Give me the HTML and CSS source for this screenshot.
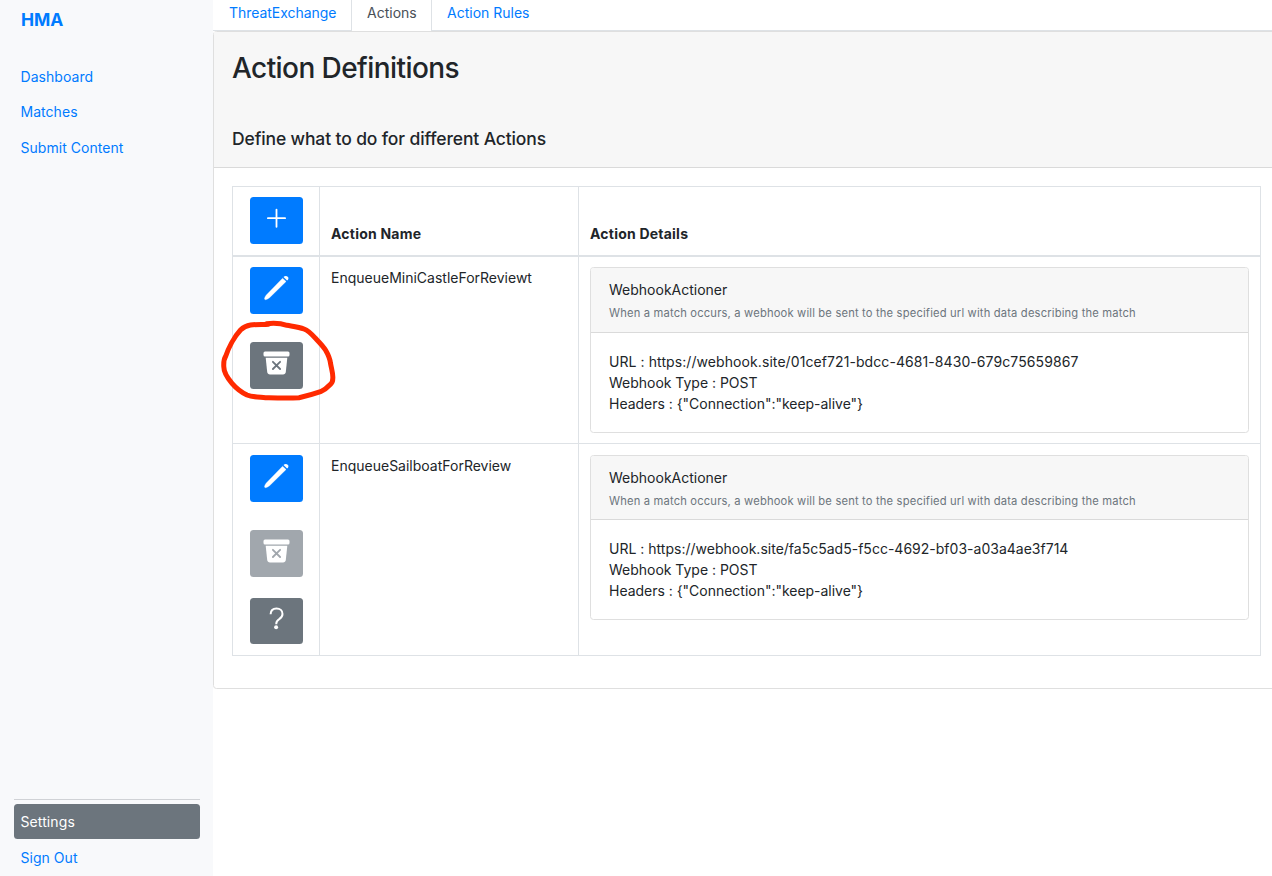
FILE: index.html
```html
<!DOCTYPE html>
<html lang="en">
<head>
<meta charset="utf-8">
<title>HMA - Action Definitions</title>
<link rel="stylesheet" href="styles.css">
</head>
<body>
<svg class="defs" aria-hidden="true">
  <symbol id="plus" viewBox="-0.5 0 29 28"><path d="M14 5.6v17.2M5.4 14.200h17.2" fill="none" stroke="#fff" stroke-width="1.8" stroke-linecap="round"/></symbol>
  <symbol id="pencil" viewBox="-0.5 0 29 28"><path d="M20.100 4.200l3.500 3.300L7.300 23.500c-1.200 1.200-3.500 2.300-4.500 2.200-.9-.1-1-1.100-.5-2.100.4-1 .8-2 1.500-2.700z" fill="#fff" stroke="#fff" stroke-width=".3"/><path d="M21 3.100c1-1.200 3-1.400 4.200-.4s.9 2.700-.6 3.900z" fill="#fff"/></symbol>
  <symbol id="archive" viewBox="-0.5 0 29 28"><rect x="1" y="2.400" width="26" height="5" rx="1.500" fill="#fff"/><path d="M3.200 8.700h21.600l-1.500 14.200c-.2 1.600-1.200 2.500-2.800 2.500h-13c-1.600 0-2.600-.9-2.800-2.500z" fill="#fff"/><path d="M10.400 12.800l7.200 7.200M17.600 12.800l-7.200 7.200" fill="none" stroke="currentColor" stroke-width="1.800" stroke-linecap="round"/></symbol>
  <symbol id="question" viewBox="-0.5 0 29 28"><path d="M8.100 9.300C8.200 5.600 10.500 3.600 14 3.600c3.600 0 6 2.100 6 5.300 0 2.400-1.300 3.800-3.300 5.200-2 1.300-2.900 2.300-2.900 4.300v.8" fill="none" stroke="#fff" stroke-width="2"/><circle cx="13.600" cy="22.300" r="2" fill="#fff"/></symbol>
</svg>
<div class="app">
  <aside class="sidebar">
    <a class="brand">HMA</a>
    <nav class="nav">
      <a class="nav-link">Dashboard</a>
      <a class="nav-link second">Matches</a>
      <a class="nav-link">Submit Content</a>
    </nav>
    <div class="nav-bottom">
      <a class="nav-link active">Settings</a>
      <a class="nav-link">Sign Out</a>
    </div>
  </aside>
  <main class="main">
    <div class="tabs">
      <a class="tab tab-first">ThreatExchange</a>
      <a class="tab tab-active">Actions</a>
      <a class="tab tab-last">Action Rules</a>
    </div>
    <section class="panel">
      <header class="panel-header">
        <h1 class="title">Action Definitions</h1>
        <h2 class="subtitle">Define what to do for different Actions</h2>
      </header>
      <div class="table">
        <div class="cell controls"><button class="btn primary"><svg class="icon"><use href="#plus"/></svg></button></div>
        <div class="cell heading">Action Name</div>
        <div class="cell heading">Action Details</div>

        <div class="cell controls row-line">
          <button class="btn primary"><svg class="icon"><use href="#pencil"/></svg></button>
          <button class="btn secondary"><svg class="icon"><use href="#archive"/></svg></button>
        </div>
        <div class="cell name row-line">EnqueueMiniCastleForReviewt</div>
        <div class="cell details row-line">
          <article class="card">
            <div class="card-header"><div class="card-name">WebhookActioner</div><div class="card-note">When a match occurs, a webhook will be sent to the specified url with data describing the match</div></div>
            <div class="card-body"><div class="url-digits">URL : https://webhook.site/01cef721-bdcc-4681-8430-679c75659867</div><div>Webhook Type : POST</div><div>Headers : {"Connection":"keep-alive"}</div></div>
          </article>
        </div>

        <div class="cell controls last-row">
          <button class="btn primary"><svg class="icon"><use href="#pencil"/></svg></button>
          <button class="btn disabled"><svg class="icon"><use href="#archive"/></svg></button>
          <button class="btn secondary help"><svg class="icon"><use href="#question"/></svg></button>
        </div>
        <div class="cell name last-row">EnqueueSailboatForReview</div>
        <div class="cell details last-row">
          <article class="card short">
            <div class="card-header"><div class="card-name">WebhookActioner</div><div class="card-note">When a match occurs, a webhook will be sent to the specified url with data describing the match</div></div>
            <div class="card-body"><div class="url">URL : https://webhook.site/fa5c5ad5-f5cc-4692-bf03-a03a4ae3f714</div><div>Webhook Type : POST</div><div>Headers : {"Connection":"keep-alive"}</div></div>
          </article>
        </div>
      </div>
    </section>
  </main>
</div>
<svg class="marker" viewBox="0 0 120 84"><path d="M46.500 5.700C51 5.200 61 5.300 67 7.300C74 8.500 79 9 84 11C89 13 92 16.500 95.500 20.300C100 25 103 28 105.500 32C109 38 110 41 110.500 45.300C111.500 51 113.200 56 112.800 60.300C112.800 63 112 65 110.500 66.300C108 69 104.500 72 100.500 73.700C94 76 87 78 79 79.700C68 80.500 56 80 45.500 79.700C38 79 32 79 27 77C21 74 16 70 12 65.300C7.500 60 3.800 55 3.800 48.700C3.600 45 4 41 5.500 38.700C8 31 14 19 20.500 12C23.500 9 27 7.500 30.500 7C36 6.300 44 6.600 48.500 6.200" fill="none" stroke="#ff2a00" stroke-width="5" stroke-linecap="round" stroke-linejoin="round"/></svg>
</body>
</html>
```
FILE: styles.css
```css
* { box-sizing: border-box; }
body { margin: 0; width: 1272px; height: 876px; overflow: hidden; background: #fff; color: #212529; font: 14px/21px Inter, "Liberation Sans", sans-serif; }
.defs { display: none; }
.app { display: flex; height: 876px; }
.sidebar { width: 213px; flex: none; background: #f8f9fb; padding: 6px 13px 0 14px; display: flex; flex-direction: column; color: #007bff; }
.brand { font-size: 17.5px; line-height: 27px; font-weight: 700; padding-left: 7px; letter-spacing: -0.1px; }
.nav { margin-top: 26px; }
.nav-link { display: block; height: 35.5px; line-height: 36px; padding-left: 6.500px; border-radius: 3.5px; letter-spacing: 0.04px; }
.second { line-height: 34px; }
.nav-bottom { margin-top: auto; border-top: 1px solid #d0d2d6; padding-top: 4px; }
.active { background: #6c757d; color: #fff; height: 35px; letter-spacing: 0.1px; }
.nav-bottom .nav-link:last-child { height: 37px; line-height: 38px; }
.main { flex: none; width: 1066px; }
.tabs { display: flex; height: 31px; border-bottom: 1px solid #dee2e6; color: #007bff; }
.tab { line-height: 26px; height: 30px; padding-left: 16px; }
.tab-first { width: 138px; letter-spacing: -0.04px; }
.tab-active { width: 81px; height: 31px; padding-left: 15px; background: #fff; border: solid #dee2e6; border-width: 0 1px; color: #495057; }
.tab-last { padding-left: 15px; }
.panel { height: 658px; border: 1px solid #dfdfdf; border-radius: 3.5px; }
.panel-header { height: 136px; background: #f7f7f7; border-bottom: 1px solid #dadada; padding: 19px 18px 0; }
.title, .subtitle { margin: 0; font-weight: 500; }
.title { font-size: 28px; line-height: 35px; letter-spacing: -0.57px; }
.subtitle { font-size: 17.5px; line-height: 21px; margin-top: 42px; letter-spacing: -0.13px; }
.table { margin: 18px 0 0 18px; width: 1029px; height: 470px; display: grid; grid-template-columns: 87px 259px 682px; grid-template-rows: 70px 187px 212px; border: solid #dee2e6; border-width: 1px 0 0 1px; }
.cell { border: solid #dee2e6; border-width: 0 1px 2px 0; }
.row-line, .last-row { border-bottom-width: 1px; }
.controls { padding: 10px 0 0 17px; display: flex; flex-direction: column; gap: 28px; }
.last-row.controls { padding-top: 11px; }
.btn { width: 53px; height: 47px; flex: none; margin: 0; padding: 7px 0 0; border: 0; border-radius: 3.5px; display: flex; justify-content: center; align-items: flex-start; }
.primary { background: #007bff; color: #007bff; }
.secondary { background: #6c757d; color: #6c757d; }
.disabled { background: #a1a7ad; color: #a1a7ad; }
.help { height: 46px; margin-top: -7px; }
.icon { width: 29px; height: 28px; display: block; }
.heading { font-weight: 700; padding: 36px 11px 0; letter-spacing: 0.22px; }
.name { padding: 10px 11px 0; }
.last-row.name { padding-top: 11px; }
.details { padding: 10px 11px 0; }
.last-row.details { padding-top: 11px; }
.card { height: 166px; border: 1px solid #dfdfdf; border-radius: 3.5px; overflow: hidden; }
.card-header { height: 65px; background: #f7f7f7; border-bottom: 1px solid #dadada; padding: 11px 18px 0; }
.card-note { font-size: 11.2px; line-height: 21px; margin-top: 3px; color: #6c757d; letter-spacing: 0.17px; }
.card-body { padding: 18px 18px 0; letter-spacing: -0.02px; }
.url { letter-spacing: 0.01px; }
.url-digits { letter-spacing: 0.08px; }
.short { height: 165px; }
.short .card-header { height: 64px; }
.marker { position: absolute; left: 219.5px; top: 318px; width: 120px; height: 84px; pointer-events: none; }
```
